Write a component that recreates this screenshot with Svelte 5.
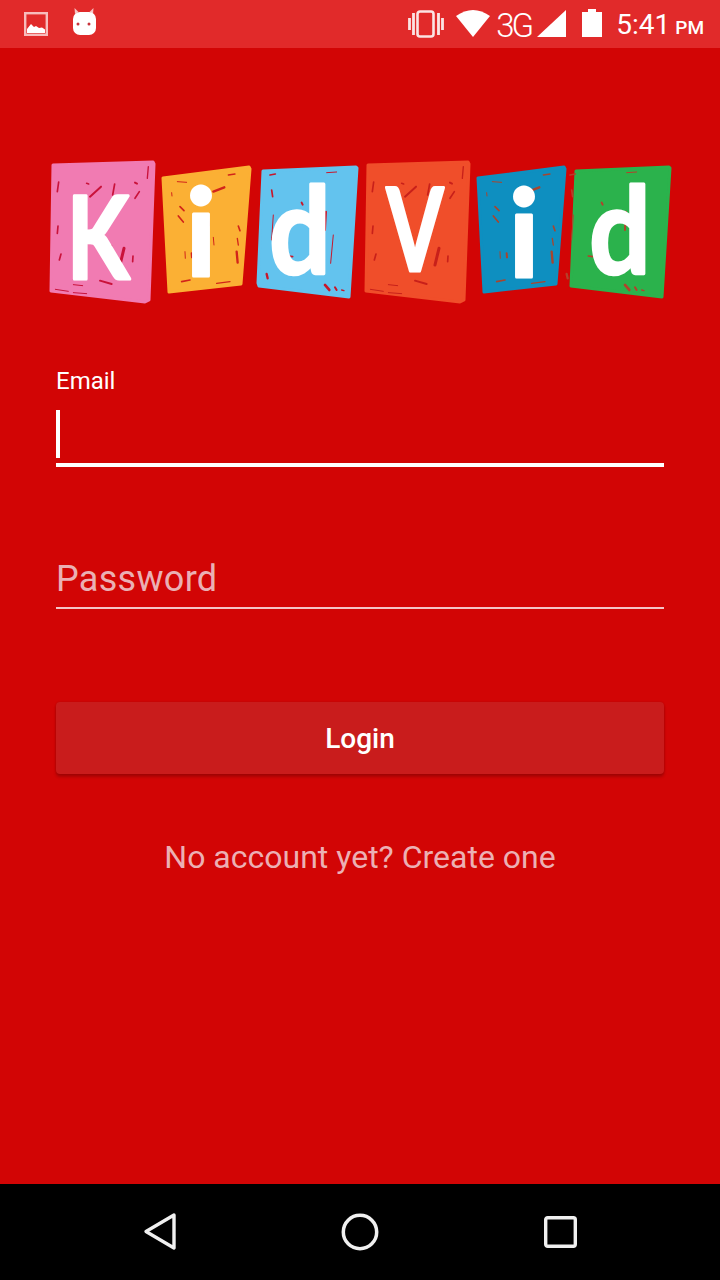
<script>
  // scratch marks are shared between tiles, coords are 3x crop px
  const marksK = [
    [150, 140, 183, 110, 6], [218, 135, 224, 102, 5], [285, 145, 298, 125, 5], [322, 85, 325, 50, 4],
    [52, 125, 56, 96, 5], [52, 250, 54, 228, 5], [240, 345, 252, 295, 9], [278, 335, 279, 318, 5],
    [58, 330, 63, 312, 5], [180, 392, 215, 402, 6], [100, 428, 140, 431, 3], [46, 418, 85, 424, 3],
    [100, 404, 128, 407, 3], [140, 100, 146, 102, 5], [285, 98, 291, 101, 6], [210, 285, 214, 288, 6],
  ];
  const marksI = [
    [520, 125, 553, 112, 7], [412, 95, 440, 97, 3], [565, 75, 585, 72, 4], [420, 170, 432, 182, 5],
    [415, 198, 430, 216, 5], [505, 208, 507, 226, 5], [595, 228, 600, 242, 5], [592, 265, 595, 285, 4],
    [590, 305, 593, 338, 7], [435, 305, 436, 325, 3], [455, 310, 456, 322, 6], [425, 395, 450, 390, 5],
    [530, 400, 570, 395, 4], [395, 128, 396, 138, 3], [520, 262, 522, 285, 3],
  ];
  const marksD = [
    [690, 75, 706, 72, 5], [695, 120, 698, 140, 5], [700, 195, 695, 270, 3], [858, 185, 855, 240, 6],
    [880, 255, 872, 340, 3], [680, 372, 683, 385, 7], [855, 405, 868, 420, 8], [885, 412, 890, 420, 6],
    [905, 420, 912, 422, 4], [745, 318, 758, 320, 5], [860, 68, 890, 66, 3], [785, 158, 788, 164, 6],
  ];

  const tiles = [
    { fill: '#f17bb2', mark: '#c9123a', pts: '53,165 153,162 154,164 149,300 145,302 51,291', dx: 40, marks: marksK },
    { fill: '#fbb034', mark: '#d2241a', pts: '163,178 249,167 250,169 241,284 169,292', dx: 40, marks: marksI },
    { fill: '#63c3ee', mark: '#c9162a', pts: '263,171 356,167 357,168 349,297 259,286 258,283', dx: 40, marks: marksD },
    { fill: '#f04e2a', mark: '#c8201a', pts: '368,165 468,162 469,164 464,300 460,302 366,291', dx: 355, marks: marksK },
    { fill: '#0e8fc0', mark: '#a8452e', pts: '478,178 564,167 565,169 556,284 484,292', dx: 355, marks: marksI },
    { fill: '#2bb24c', mark: '#b5402a', pts: '576,171 669,167 670,168 662,297 571,286', dx: 340, marks: marksD },
  ];

  const letters = [
    { ch: 'K', x: 98, y: 279, size: 114, sx: 0.8 },
    { ch: 'i', x: 201, y: 276, size: 120, sx: 1 },
    { ch: 'd', x: 300, y: 274, size: 120, sx: 0.9 },
    { ch: 'V', x: 415, y: 271, size: 114, sx: 0.72 },
    { ch: 'i', x: 524, y: 277, size: 120, sx: 1 },
    { ch: 'd', x: 620, y: 274, size: 120, sx: 0.9 },
  ];
</script>

<div class="screen">
  <header class="status">
    <svg class="st-image" viewBox="0 0 24 24" aria-hidden="true">
      <rect x="1.200" y="1.200" width="21.600" height="21.600" fill="none" stroke="#f7bcbc" stroke-width="2.400" />
      <path d="M3 21v-4l4-5 3 3 2-1 3 2 3-.5 3 2v3.500z" fill="#fff" />
    </svg>
    <svg class="st-droid" viewBox="0 0 24 28" aria-hidden="true">
      <path d="M3 6 2.500 0l4 4zM21 6l.5-6-4 4z" fill="#f7c4c4" />
      <rect x="1" y="4" width="23" height="23" rx="7" fill="#fff" />
      <circle cx="6" cy="16" r="1.500" fill="#c9323a" />
      <circle cx="17" cy="16" r="1.500" fill="#c9323a" />
    </svg>

    <div class="st-right">
      <svg class="st-vibrate" viewBox="0 0 36 28" aria-hidden="true">
        <rect x="9.500" y="1.500" width="16" height="25" rx="2.500" fill="none" stroke="#fbe4e4" stroke-width="2.600" />
        <path d="M1.500 8v12M5.500 3v22M30.500 3v22M34.500 8v12" stroke="#fbe4e4" stroke-width="2.800" fill="none" />
      </svg>
      <svg class="st-wifi" viewBox="0 0 34 27" aria-hidden="true">
        <path d="M0 6Q17-6 34 6L17 27z" fill="#fff" />
      </svg>
      <span class="st-net">3G</span>
      <svg class="st-signal" viewBox="0 0 29 27" aria-hidden="true">
        <path d="M29 0v27H0z" fill="#fff" />
      </svg>
      <svg class="st-battery" viewBox="0 0 20 28" aria-hidden="true">
        <path d="M6 0h8v3h6v25H0V3h6z" fill="#fff" />
      </svg>
      <span class="st-time">5:41</span>
      <span class="st-ampm">PM</span>
    </div>
  </header>

  <main class="page">
    <svg class="logo" viewBox="40 150 640 160" role="img" aria-label="KidVid">
      {#each tiles as t}
        <polygon points={t.pts} fill={t.fill} stroke={t.fill} stroke-width="3" stroke-linejoin="round" />
        <g transform="translate({t.dx} 150) scale(.3333)">
          {#each t.marks as m}
            <line x1={m[0]} y1={m[1]} x2={m[2]} y2={m[3]} stroke={t.mark} stroke-width={m[4]} stroke-linecap="round" />
          {/each}
        </g>
      {/each}
      {#each letters as l}
        <text class="logo-letter" transform="translate({l.x} {l.y}) scale({l.sx} 1)" font-size={l.size} text-anchor="middle">{l.ch}</text>
      {/each}
    </svg>

    <form class="form">
      <div class="label">Email</div>
      <div class="field">
        <span class="caret"></span>
      </div>
      <div class="underline focused"></div>

      <div class="field password">
        <span class="placeholder">Password</span>
      </div>
      <div class="underline"></div>

      <button type="button" class="login">Login</button>
      <div class="signup">No account yet? Create one</div>
    </form>
  </main>

  <nav class="navbar">
    <svg viewBox="0 0 34 40" aria-hidden="true">
      <path d="M31 3 3 19.500 31 36z" fill="none" stroke="#f0f0f0" stroke-width="3.400" stroke-linejoin="round" />
    </svg>
    <svg viewBox="0 0 40 40" aria-hidden="true">
      <circle cx="20" cy="20" r="16.700" fill="none" stroke="#f0f0f0" stroke-width="3.500" />
    </svg>
    <svg viewBox="0 0 40 40" aria-hidden="true">
      <rect x="5.700" y="5.700" width="29.600" height="28.600" rx="2" fill="none" stroke="#f0f0f0" stroke-width="3.400" />
    </svg>
  </nav>
</div>

<style>
  :global(body) {
    margin: 0;
    background: #d20505;
  }

  .screen {
    width: 720px;
    height: 1280px;
    display: flex;
    flex-direction: column;
    overflow: hidden;
    font-family: Roboto, "Liberation Sans", sans-serif;
  }

  .status {
    height: 48px;
    flex-shrink: 0;
    display: flex;
    align-items: flex-start;
    background: #e12a2a;
    color: #fff;
    padding-left: 24px;
  }

  .st-image {
    width: 24px;
    height: 24px;
    margin-top: 12px;
  }

  .st-droid {
    width: 24px;
    height: 28px;
    margin: 8px 0 0 24px;
  }

  .st-right {
    margin-left: auto;
    display: flex;
    align-items: flex-start;
    padding-right: 16px;
  }

  .st-vibrate {
    width: 36px;
    height: 28px;
    margin-top: 10px;
  }

  .st-wifi {
    width: 34px;
    height: 27px;
    margin: 10px 0 0 12px;
  }

  .st-net {
    width: 40px;
    margin-left: 6px;
    font-size: 33px;
    font-weight: 300;
    line-height: 51px;
    letter-spacing: -3px;
  }

  .st-signal {
    width: 29px;
    height: 27px;
    margin: 10px 0 0 1px;
  }

  .st-battery {
    width: 20px;
    height: 28px;
    margin: 9px 0 0 16px;
  }

  .st-time {
    margin-left: 14px;
    font-size: 28px;
    line-height: 50px;
  }

  .st-ampm {
    margin-left: 5px;
    font-size: 19px;
    font-weight: 500;
    line-height: 56px;
  }

  .page {
    flex: 1;
    display: flex;
    flex-direction: column;
    background: #d20505;
    padding-top: 102px;
  }

  .logo {
    display: block;
    width: 640px;
    height: 160px;
    margin-left: 40px;
  }

  .logo-letter {
    font-family: Lato, "Open Sans", sans-serif;
    font-weight: 700;
    fill: #fff;
    stroke: #fff;
    stroke-width: 3px;
    stroke-linejoin: round;
  }

  .form {
    display: flex;
    flex-direction: column;
    padding: 57px 56px 0;
  }

  .label {
    font-size: 24px;
    line-height: 28px;
    color: #fff;
  }

  .field {
    height: 48px;
    margin-top: 15px;
    display: flex;
    align-items: center;
  }

  .field.password {
    margin-top: 87px;
  }

  .caret {
    width: 4px;
    height: 48px;
    background: #fff;
  }

  .placeholder {
    font-size: 36px;
    letter-spacing: 0.3px;
    padding-top: 2px;
    color: #eab0b4;
  }

  .underline {
    height: 2px;
    margin-top: 5px;
    background: #f4c4c6;
  }

  .underline.focused {
    height: 4px;
    background: #fff;
  }

  .login {
    height: 72px;
    margin-top: 93px;
    border: none;
    border-radius: 4px;
    background: #c91c1c;
    color: #fff;
    font-family: inherit;
    font-size: 28px;
    font-weight: 500;
    box-shadow: 0 3px 3px rgba(0, 0, 0, 0.2), 0 0 2px rgba(0, 0, 0, 0.15);
  }

  .signup {
    margin-top: 63px;
    font-size: 32px;
    line-height: 40px;
    text-align: center;
    color: #ecb0b4;
  }

  .navbar {
    height: 96px;
    flex-shrink: 0;
    display: flex;
    justify-content: space-between;
    align-items: center;
    padding: 0 140px;
    background: #000;
  }

  .navbar svg {
    width: 40px;
    height: 40px;
  }
</style>
